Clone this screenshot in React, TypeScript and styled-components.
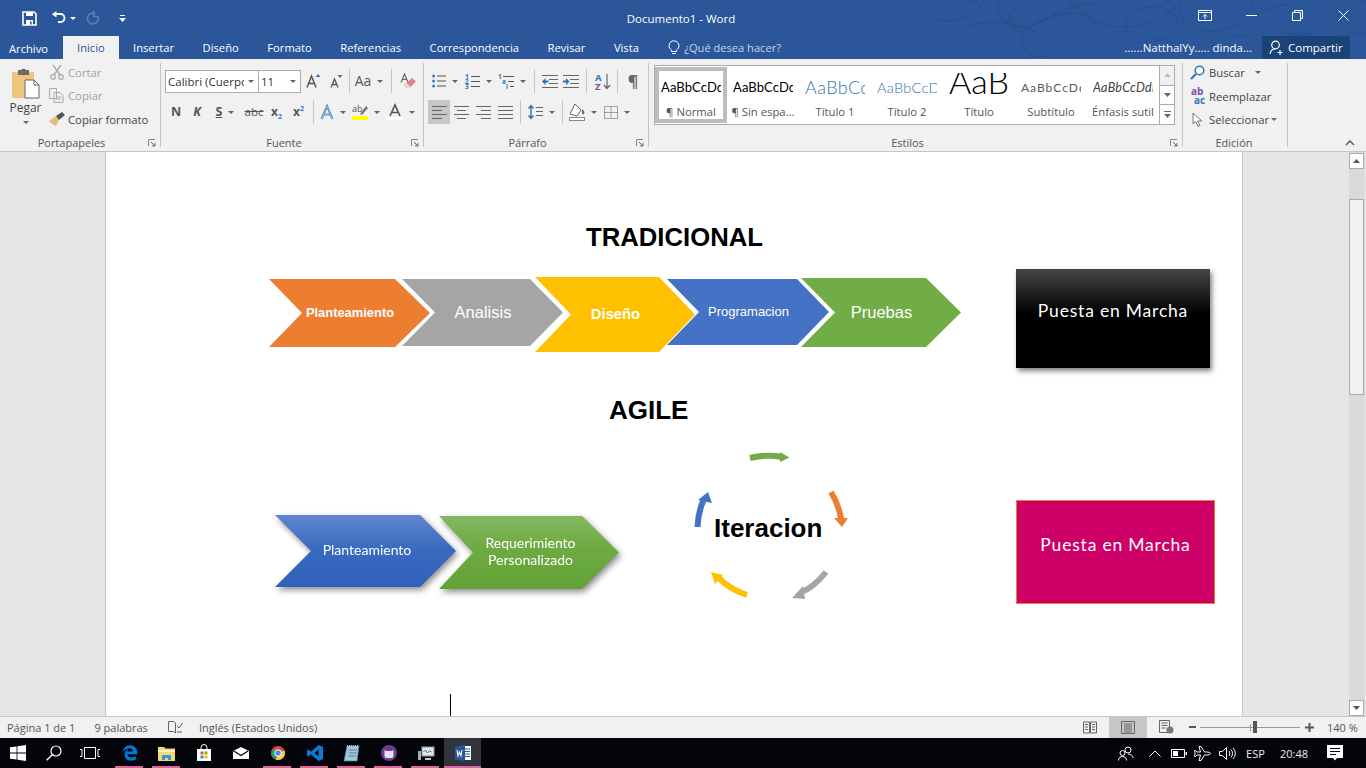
import React from "react";
import styled, { createGlobalStyle, css } from "styled-components";
import { FaEdgeLegacy } from "react-icons/fa6";

const UI = `"Open Sans", "Noto Sans", sans-serif`;
const PAGE_X = 106;
const PAGE_Y = 152;

const GlobalStyle = createGlobalStyle`
  html, body { margin: 0; padding: 0; overflow: hidden; background: #f1f1f1; }
  * { box-sizing: border-box; }
  svg { display: block; flex: none; overflow: visible; }
`;

const Shell = styled.div`
  width: 1366px;
  height: 768px;
  display: flex;
  flex-direction: column;
  font-family: ${UI};
  font-size: 11.3px;
  color: #444;
  overflow: hidden;
`;

/* ---------- title + tabs ---------- */
const Header = styled.header`
  position: relative;
  height: 59px;
  background: #2b579a;
  color: #fff;
  flex: none;
`;
const Filigree = styled.svg`
  position: absolute;
  left: 880px;
  top: 0;
  pointer-events: none;
`;
const TitleBar = styled.div`
  position: relative;
  height: 36px;
  display: grid;
  grid-template-columns: 1fr auto 1fr;
  align-items: center;
`;
const Qat = styled.div`
  display: flex;
  align-items: center;
  padding-left: 22px;
`;
const DocTitle = styled.div`
  font-size: 11.5px;
  padding-right: 4px;
`;
const WindowControls = styled.div`
  justify-self: end;
  display: flex;
  height: 36px;
`;
const WinBtn = styled.div`
  width: 46px;
  height: 30px;
  display: flex;
  align-items: center;
  justify-content: center;
`;
const TabBar = styled.div`
  position: relative;
  height: 23px;
  display: flex;
  align-items: stretch;
`;
const Tab = styled.div<{ $active?: boolean; $file?: boolean }>`
  display: flex;
  align-items: center;
  padding: 0 14.3px;
  font-size: 11.2px;
  color: #fff;
  ${(p) => p.$file && css`padding: 1px 15px 0 9px;`}
  ${(p) => p.$active && css`
    background: #f1f1f1;
    color: #2b579a;
    padding: 0 14px;
  `}
`;
const TellMe = styled.div`
  display: flex;
  align-items: center;
  gap: 4px;
  margin-left: 15px;
  color: #c5d3e8;
  font-size: 11.1px;
`;
const UserArea = styled.div`
  margin-left: auto;
  display: flex;
  align-items: center;
  padding-right: 16px;
  gap: 10px;
  font-size: 11.5px;
`;
const ShareBtn = styled.div`
  width: 88px;
  height: 23px;
  margin-top: -1px;
  background: #1a4478;
  display: flex;
  align-items: center;
  gap: 3px;
  padding-left: 7px;
`;

/* ---------- ribbon ---------- */
const Ribbon = styled.section`
  position: relative;
  height: 93px;
  flex: none;
  display: flex;
  background: #f1f1f1;
  border-bottom: 1px solid #c6c6c6;
`;
const Group = styled.div<{ $w: number; $pad?: number; $top?: number }>`
  position: relative;
  width: ${(p) => p.$w}px;
  flex: none;
  padding: ${(p) => p.$top ?? 6}px 0 0 ${(p) => p.$pad ?? 0}px;
  display: flex;
  flex-direction: column;
  &::after {
    content: "";
    position: absolute;
    right: 0;
    top: 4px;
    bottom: 4px;
    width: 1px;
    background: #c6c6c6;
  }
`;
const GroupBody = styled.div`
  flex: 1;
  min-height: 0;
`;
const GroupLabel = styled.div<{ $r: number }>`
  height: 16px;
  line-height: 16px;
  padding-right: ${(p) => p.$r}px;
  text-align: center;
  font-size: 11px;
  color: #555;
`;
const Launcher = styled.svg`
  position: absolute;
  right: 5px;
  bottom: 4px;
`;
const Collapse = styled.svg`
  position: absolute;
  left: 1345px;
  top: 81px;
`;
const Rows = styled.div`
  display: flex;
  flex-direction: column;
  gap: 7px;
  padding-top: 4px;
`;
const Row = styled.div`
  display: flex;
  align-items: center;
  height: 24px;
`;
const Slot = styled.div<{ $w: number; $active?: boolean }>`
  width: ${(p) => p.$w}px;
  height: 24px;
  flex: none;
  display: flex;
  align-items: center;
  justify-content: center;
  gap: 6px;
  ${(p) => p.$active && css`background: #c6c6c6;`}
`;
const Sep = styled.div<{ $w: number }>`
  width: ${(p) => p.$w}px;
  height: 24px;
  flex: none;
  display: flex;
  justify-content: center;
  &::before {
    content: "";
    width: 1px;
    height: 100%;
    background: #c6c6c6;
  }
`;
const Caret = styled.span<{ $ml?: number; $light?: boolean }>`
  width: 0;
  height: 0;
  flex: none;
  margin-left: ${(p) => p.$ml ?? 0}px;
  border-left: 3.5px solid transparent;
  border-right: 3.5px solid transparent;
  border-top: 3.5px solid ${(p) => (p.$light ? "#fff" : "#666")};
`;
const Combo = styled.div<{ $w: number }>`
  width: ${(p) => p.$w}px;
  height: 23px;
  flex: none;
  background: #fff;
  border: 1px solid #ababab;
  display: flex;
  align-items: center;
  justify-content: space-between;
  padding: 0 4px 0 2px;
  font-size: 11.5px;
  color: #333;
  white-space: nowrap;
  overflow: hidden;
  & + & { margin-left: -1px; }
`;
const ComboText = styled.span`
  overflow: hidden;
  width: 76px;
`;
const Glyph = styled.span<{ $size?: number; $bold?: boolean; $color?: string; $italic?: boolean; $strike?: boolean; $under?: boolean }>`
  font-family: "Open Sans", sans-serif;
  font-size: ${(p) => p.$size ?? 12}px;
  font-weight: ${(p) => (p.$bold ? 700 : 400)};
  font-style: ${(p) => (p.$italic ? "italic" : "normal")};
  color: ${(p) => p.$color ?? "#555"};
  text-decoration: ${(p) => (p.$strike ? "line-through" : p.$under ? "underline" : "none")};
  line-height: 1;
  & sub, & sup { font-size: 7px; color: #3f7cc0; line-height: 0; }
`;

/* clipboard */
const ClipWrap = styled.div`
  display: flex;
  height: 70px;
`;
const PasteCol = styled.div`
  width: 48px;
  padding: 6px 0 0 4px;
  display: flex;
  flex-direction: column;
  align-items: center;
  font-size: 12px;
  color: #444;
`;
const PasteLabel = styled.div`
  margin-top: 1px;
  line-height: 16px;
  padding-right: 1px;
`;
const PasteCaret = styled(Caret)`
  margin-top: 5px;
`;
const ActionList = styled.div`
  display: flex;
  flex-direction: column;
`;
const Action = styled.div<{ $muted?: boolean }>`
  height: 23.5px;
  display: flex;
  align-items: center;
  gap: 3px;
  white-space: nowrap;
  font-size: 11.3px;
  color: ${(p) => (p.$muted ? "#a3a3a3" : "#444")};
`;
const IconBox = styled.div`
  width: 17px;
  display: flex;
  justify-content: center;
`;

/* styles gallery */
const Gallery = styled.div`
  margin-left: 5px;
  width: 521px;
  height: 60px;
  display: flex;
  border: 1px solid #ababab;
  background: #fff;
`;
const StyleItem = styled.div<{ $active?: boolean }>`
  position: relative;
  width: 72px;
  height: 58px;
  flex: none;
  display: flex;
  flex-direction: column;
  align-items: center;
  padding-top: 7px;
  ${(p) => p.$active && css`
    &::after {
      content: "";
      position: absolute;
      inset: 1px 0;
      border: 4px solid #bdbdbd;
    }
  `}
`;
const StylePreview = styled.div<{ $size: number; $color?: string; $italic?: boolean; $spacing?: number; $light?: boolean; $large?: boolean }>`
  height: 28px;
  width: 60px;
  overflow: hidden;
  white-space: nowrap;
  display: flex;
  align-items: ${(p) => (p.$large ? "flex-end" : "center")};
  font-family: "Lato", sans-serif;
  font-size: ${(p) => p.$size}px;
  font-weight: ${(p) => (p.$light ? 300 : 400)};
  color: ${(p) => p.$color ?? "#000"};
  font-style: ${(p) => (p.$italic ? "italic" : "normal")};
  letter-spacing: ${(p) => p.$spacing ?? 0}px;
`;
const StyleLabel = styled.div`
  font-size: 11.3px;
  line-height: 16px;
  margin-top: 3px;
  color: #555;
  white-space: nowrap;
`;
const GalleryScroll = styled.div`
  margin-left: auto;
  width: 15px;
  display: flex;
  flex-direction: column;
  border-left: 1px solid #ababab;
`;
const GalleryBtn = styled.div<{ $muted?: boolean }>`
  flex: 1;
  display: flex;
  align-items: center;
  justify-content: center;
  background: ${(p) => (p.$muted ? "#f1f1f1" : "#fff")};
  & + & { border-top: 1px solid #ababab; }
`;

/* ---------- document ---------- */
const DocArea = styled.main`
  flex: 1;
  min-height: 0;
  display: flex;
  background: #e6e6e6;
`;
const Gutter = styled.div<{ $w: number }>`
  width: ${(p) => p.$w}px;
  flex: none;
`;
const Page = styled.div`
  position: relative;
  width: 1138px;
  flex: none;
  background: #fff;
  border-left: 1px solid #c6c6c6;
  border-right: 1px solid #c6c6c6;
`;
const Heading = styled.div<{ $x: number; $y: number; $size?: number }>`
  position: absolute;
  left: ${(p) => p.$x - PAGE_X}px;
  top: ${(p) => p.$y - PAGE_Y}px;
  font: 700 ${(p) => p.$size ?? 26}px/32px "Liberation Sans", Arial, sans-serif;
  color: #000;
  white-space: nowrap;
`;
const ShadowWrap = styled.div`
  filter: drop-shadow(2px 3px 3px rgba(0, 0, 0, 0.45));
`;
const Chevron = styled.div<{
  $x: number; $y: number; $w: number; $h: number; $notch: number; $tip: number;
  $bg: string; $size: number; $bold?: boolean; $calibri?: boolean;
}>`
  position: absolute;
  left: ${(p) => p.$x - PAGE_X}px;
  top: ${(p) => p.$y - PAGE_Y}px;
  width: ${(p) => p.$w}px;
  height: ${(p) => p.$h}px;
  padding: 0 0 ${(p) => (p.$calibri ? 3 : 1)}px ${(p) => (p.$calibri ? 3 : 1)}px;
  clip-path: polygon(
    0 0,
    calc(100% - ${(p) => p.$tip}px) 0,
    100% 50%,
    calc(100% - ${(p) => p.$tip}px) 100%,
    0 100%,
    ${(p) => p.$notch}px 50%
  );
  background: ${(p) => p.$bg};
  display: flex;
  align-items: center;
  justify-content: center;
  text-align: center;
  color: #fff;
  font-family: ${(p) => (p.$calibri ? `"Lato", sans-serif` : `"Liberation Sans", Arial, sans-serif`)};
  font-size: ${(p) => p.$size}px;
  font-weight: ${(p) => (p.$bold ? 700 : 400)};
  line-height: 17px;
`;
const MarchaBox = styled.div<{ $x: number; $y: number; $w: number; $h: number; $pink?: boolean }>`
  position: absolute;
  left: ${(p) => p.$x - PAGE_X}px;
  top: ${(p) => p.$y - PAGE_Y}px;
  width: ${(p) => p.$w}px;
  height: ${(p) => p.$h}px;
  display: flex;
  align-items: center;
  justify-content: center;
  padding-bottom: ${(p) => (p.$pink ? 15 : 17)}px;
  font: 400 17.5px "Lato", sans-serif;
  letter-spacing: 0.8px;
  color: #fff;
  ${(p) =>
    p.$pink
      ? css`
          background: #cc0066;
          border: 1px solid #ed7d31;
        `
      : css`
          background: linear-gradient(#474747 0%, #000 45%);
          box-shadow: 2px 3px 5px rgba(0, 0, 0, 0.5);
        `}
`;
const CycleArt = styled.svg`
  position: absolute;
  left: ${685 - PAGE_X}px;
  top: ${445 - PAGE_Y}px;
`;
const TextCaret = styled.div`
  position: absolute;
  left: ${450 - PAGE_X}px;
  bottom: 0;
  width: 1px;
  height: 22px;
  background: #000;
`;
const ScrollBar = styled.div`
  width: 16px;
  flex: none;
  background: #dadada;
  display: flex;
  flex-direction: column;
  padding-right: 1px;
`;
const ScrollBtn = styled.div`
  height: 16px;
  margin-top: 1px;
  background: #fff;
  border: 1px solid #ababab;
  display: flex;
  align-items: center;
  justify-content: center;
`;
const ScrollThumb = styled.div`
  height: 196px;
  margin-top: 30px;
  background: #f1f1f1;
  border: 1px solid #ababab;
`;
const ScrollFill = styled.div`
  flex: 1;
`;

/* ---------- status bar ---------- */
const StatusBar = styled.footer`
  height: 22px;
  flex: none;
  display: flex;
  align-items: center;
  background: #f1f1f1;
  border-top: 1px solid #c6c6c6;
  font-size: 11px;
  color: #555;
  padding: 0 0 1px 7px;
`;
const StatusText = styled.span<{ $gap: number }>`
  margin-right: ${(p) => p.$gap}px;
  white-space: nowrap;
`;
const StatusRight = styled.div`
  margin-left: auto;
  display: flex;
  align-items: center;
  height: 100%;
`;
const ViewBtn = styled.div<{ $w: number; $active?: boolean }>`
  width: ${(p) => p.$w}px;
  height: 21px;
  display: flex;
  align-items: center;
  justify-content: center;
  ${(p) => p.$active && css`background: #c6c6c6;`}
`;
const ZoomTrack = styled.div`
  position: relative;
  width: 100px;
  height: 1px;
  margin: 0 5px 0 4px;
  background: #999;
`;
const ZoomThumb = styled.div`
  position: absolute;
  left: 53px;
  top: -6px;
  width: 4px;
  height: 12px;
  background: #555;
`;
const ZoomMark = styled.div`
  position: absolute;
  left: 50px;
  top: -3px;
  width: 1px;
  height: 7px;
  background: #999;
`;
const ZoomPct = styled.span`
  width: 39px;
  margin-left: 13px;
  white-space: nowrap;
`;

/* ---------- taskbar ---------- */
const Taskbar = styled.nav`
  height: 30px;
  flex: none;
  display: flex;
  align-items: center;
  background: #04050a;
  color: #fff;
`;
const SysSlot = styled.div<{ $w: number; $r?: number }>`
  width: ${(p) => p.$w}px;
  height: 30px;
  padding-right: ${(p) => p.$r ?? 0}px;
  display: flex;
  align-items: center;
  justify-content: center;
  flex: none;
`;
const AppTile = styled.div<{ $open?: boolean; $active?: boolean }>`
  position: relative;
  width: 37px;
  height: 30px;
  flex: none;
  display: flex;
  align-items: center;
  justify-content: center;
  ${(p) => p.$active && css`background: #30333a;`}
  ${(p) => p.$open && css`
    &::after {
      content: "";
      position: absolute;
      left: ${p.$active ? 0 : 4}px;
      right: ${p.$active ? 0 : 5}px;
      bottom: 0;
      height: 2px;
      background: #d9659c;
    }
  `}
`;
const Tray = styled.div`
  margin-left: auto;
  padding-right: 11px;
  display: flex;
  align-items: center;
  height: 100%;
  font-size: 11px;
  color: #eee;
`;
const TrayItem = styled.div<{ $w: number }>`
  width: ${(p) => p.$w}px;
  display: flex;
  justify-content: center;
  flex: none;
`;

/* ---------- drawings ---------- */
const Lines = ({ rows, color = "#666" }: { rows: [number, number][]; color?: string }) => (
  <svg width="15" height="13" viewBox="0 0 15 13">
    {rows.map(([x, w], i) => (
      <rect key={i} x={x} y={i * (12 / (rows.length - 1 || 1))} width={w} height="1" fill={color} />
    ))}
  </svg>
);
const Bullets = () => (
  <svg width="14" height="13" viewBox="0 0 14 13">
    {[1, 6, 11].map((y) => (
      <g key={y}>
        <circle cx="1.6" cy={y} r="1.5" fill="#3f7cc0" />
        <rect x="5" y={y - 0.5} width="9" height="1" fill="#555" />
      </g>
    ))}
  </svg>
);
const Numbered = () => (
  <svg width="15" height="15" viewBox="0 0 15 15">
    {[0, 5, 10].map((y, i) => (
      <g key={y}>
        <text x="0" y={y + 5} fontSize="6.5" fontWeight="700" fill="#2f75b5" fontFamily="Open Sans">{i + 1}</text>
        <rect x="6" y={y + 2} width="9" height="1" fill="#555" />
      </g>
    ))}
  </svg>
);
const Multi = () => (
  <svg width="16" height="15" viewBox="0 0 16 15">
    <text x="0" y="5" fontSize="6.5" fontWeight="700" fill="#2f75b5" fontFamily="Open Sans">1</text>
    <rect x="5" y="2" width="11" height="1" fill="#555" />
    <text x="4" y="10" fontSize="6.5" fontWeight="700" fill="#2f75b5" fontFamily="Open Sans">a</text>
    <rect x="10" y="7" width="6" height="1" fill="#555" />
    <text x="8" y="15" fontSize="6.5" fontWeight="700" fill="#2f75b5" fontFamily="Open Sans">i</text>
    <rect x="12" y="12" width="4" height="1" fill="#555" />
  </svg>
);
const Indent = ({ flip }: { flip?: boolean }) => (
  <svg width="16" height="13" viewBox="0 0 16 13">
    {[0, 4, 8, 12].map((y) => (
      <rect key={y} x={y === 0 || y === 12 ? 0 : 7} y={y} width={y === 0 || y === 12 ? 16 : 9} height="1" fill="#666" />
    ))}
    {flip ? (
      <path d="M0 5.5h3V3l3.5 3.5L3 10V7.5H0z" fill="#2f75b5" />
    ) : (
      <path d="M6.5 5.5h-3V3L0 6.5 3.5 10V7.5h3z" fill="#2f75b5" />
    )}
  </svg>
);

const Dialog = () => (
  <Launcher width="8" height="8" viewBox="0 0 8 8">
    <path d="M0.5 7V0.5H7" stroke="#888" fill="none" />
    <path d="M3 3l4 4M7 4v3H4" stroke="#666" fill="none" />
  </Launcher>
);

const chevrons = [
  { text: "Planteamiento", x: 269, y: 279, w: 161, h: 68, notch: 33, tip: 35, bg: "#ed7d31", size: 12.9, bold: true },
  { text: "Analisis", x: 402, y: 279, w: 161, h: 67, notch: 33, tip: 33, bg: "#a5a5a5", size: 16.5 },
  { text: "Diseño", x: 535, y: 277, w: 160, h: 75, notch: 36, tip: 36, bg: "#ffc000", size: 14.8, bold: true },
  { text: "Programacion", x: 667, y: 279, w: 162, h: 66, notch: 32, tip: 32, bg: "#4472c4", size: 13 },
  { text: "Pruebas", x: 801, y: 278, w: 160, h: 69, notch: 34, tip: 35, bg: "#70ad47", size: 16.5 },
];

const styleItems = [
  { prev: "AaBbCcDdEe", label: "¶ Normal", size: 13, active: true, spacing: 0.1 },
  { prev: "AaBbCcDdEe", label: "¶ Sin espa...", size: 13, spacing: 0.1 },
  { prev: "AaBbCcDd", label: "Título 1", size: 18, color: "#2e74b5", spacing: 0.4, light: true },
  { prev: "AaBbCcDdEe", label: "Título 2", size: 14.5, color: "#2e74b5", spacing: 0.3, light: true },
  { prev: "AaB", label: "Título", size: 34, light: true, large: true },
  { prev: "AaBbCcDdEe", label: "Subtítulo", size: 12, color: "#595959", spacing: 1 },
  { prev: "AaBbCcDdEe", label: "Énfasis sutil", size: 12.5, color: "#404040", italic: true, spacing: 0.3 },
];

const tabs = ["Insertar", "Diseño", "Formato", "Referencias", "Correspondencia", "Revisar", "Vista"];

export default function App() {
  return (
    <Shell>
      <GlobalStyle />
      <Header>
        <Filigree width="486" height="59" viewBox="0 0 486 59" fill="none" stroke="#234e8e" strokeWidth="1">
          <path d="M30 0c10 20 40 28 60 14S110-6 80 4M60 36c30-14 60-20 90-6s26 30 6 26-20-26 6-36 40-10 60 8" />
          <path d="M120 0c-10 16 14 34 36 24s30-20 60-20M150 36c-20-6-30-20-10-30M190 0c20 24 50 34 80 22s30-22 14-22" />
          <path d="M260 44c-20-10-20-30 4-36s40 10 30 24-30 8-24-6M300 0c-6 20 12 36 40 30s40-24 70-26M370 0c10 26 40 44 70 30s36-26 46-30" />
          <path d="M320 59c10-20 40-30 60-18s14 28-6 18M430 50c20-10 40-20 56-16" />
        </Filigree>
        <TitleBar>
          <Qat>
            <svg width="15" height="15" viewBox="0 0 15 15">
              <path d="M1 1h11l2 2v11H1z" fill="none" stroke="#fff" strokeWidth="1.6" />
              <path d="M4 1h7v4H4zM4 9h7v5H4z" fill="#fff" />
              <rect x="8" y="10.5" width="1.6" height="3" fill="#2b579a" />
            </svg>
            <svg style={{ marginLeft: 14 }} width="15" height="14" viewBox="0 0 15 14">
              <path d="M4 3h5.5a4 4 0 0 1 0 8H7" fill="none" stroke="#fff" strokeWidth="1.8" />
              <path d="M5.5 0v6.5L0.8 3.2z" fill="#fff" />
            </svg>
            <Caret $ml={4} $light />
            <svg style={{ marginLeft: 10 }} width="14" height="14" viewBox="0 0 14 14">
              <path d="M9.5 2.8A5.4 5.4 0 1 0 12.2 7" fill="none" stroke="#5b7fb8" strokeWidth="1.6" />
              <path d="M7.5 0v5.5h5.5" fill="none" stroke="#5b7fb8" strokeWidth="1.6" />
            </svg>
            <svg style={{ marginLeft: 19 }} width="7" height="7" viewBox="0 0 7 7">
              <path d="M1 0h5v1H1zM0 3h7L3.5 7z" fill="#fff" />
            </svg>
          </Qat>
          <DocTitle>Documento1 - Word</DocTitle>
          <WindowControls>
            <WinBtn>
              <svg width="14" height="11" viewBox="0 0 14 11">
                <path d="M.5.5h13v10H.5zM.5 2.5h13" fill="none" stroke="#fff" />
                <path d="M7 9V4.5M5 6.5l2-2 2 2" fill="none" stroke="#fff" />
              </svg>
            </WinBtn>
            <WinBtn>
              <svg width="11" height="1"><rect width="11" height="1" fill="#fff" /></svg>
            </WinBtn>
            <WinBtn>
              <svg width="11" height="11" viewBox="0 0 11 11">
                <path d="M.5 2.5h8v8h-8zM2.5 2.5v-2h8v8h-2" fill="none" stroke="#fff" />
              </svg>
            </WinBtn>
            <WinBtn>
              <svg width="11" height="11" viewBox="0 0 11 11">
                <path d="M.5.5l10 10M10.5.5l-10 10" stroke="#fff" />
              </svg>
            </WinBtn>
          </WindowControls>
        </TitleBar>
        <TabBar>
          <Tab $file>Archivo</Tab>
          <Tab $active>Inicio</Tab>
          {tabs.map((t) => (
            <Tab key={t}>{t}</Tab>
          ))}
          <TellMe>
            <svg width="12" height="15" viewBox="0 0 12 15">
              <path d="M3.5 10C2 8.800 1 7.500 1 5.800a5 5 0 0 1 10 0c0 1.700-1 3-2.500 4.200v1.500h-5zM4 13.500h4" fill="none" stroke="#fff" />
            </svg>
            ¿Qué desea hacer?
          </TellMe>
          <UserArea>
            ......NatthalYy..... dinda...
            <ShareBtn>
              <svg width="16" height="15" viewBox="0 0 16 15">
                <circle cx="6.500" cy="5" r="3.800" fill="none" stroke="#fff" strokeWidth="1.200" />
                <path d="M1 14c.5-3 2.500-5 5-5M11 10v5M8.500 12.500h5" fill="none" stroke="#fff" strokeWidth="1.200" />
              </svg>
              Compartir
            </ShareBtn>
          </UserArea>
        </TabBar>
      </Header>

      <Ribbon>
        <Group $w={161} $top={2}>
          <GroupBody>
            <ClipWrap>
              <PasteCol>
                <svg width="30" height="32" viewBox="0 0 30 32">
                  <path d="M1 5h22v26H3a2 2 0 0 1-2-2z" fill="#edc57f" />
                  <path d="M7 3h3a3 3 0 0 1 5 0h3v5H7z" fill="#6a6a6a" />
                  <path d="M14 13h9l5 5v13H14z" fill="#fff" stroke="#666" />
                  <path d="M23 13v5h5" fill="none" stroke="#666" />
                </svg>
                <PasteLabel>Pegar</PasteLabel>
                <PasteCaret />
              </PasteCol>
              <ActionList>
                <Action $muted>
                  <IconBox>
                    <svg width="14" height="15" viewBox="0 0 14 15">
                      <circle cx="3" cy="12" r="2.300" fill="none" stroke="#aaa" strokeWidth="1.200" />
                      <circle cx="11" cy="12" r="2.300" fill="none" stroke="#aaa" strokeWidth="1.200" />
                      <path d="M4 10L11 0M10 10L3 0" stroke="#aaa" strokeWidth="1.400" />
                    </svg>
                  </IconBox>
                  Cortar
                </Action>
                <Action $muted>
                  <IconBox>
                    <svg width="15" height="15" viewBox="0 0 15 15">
                      <path d="M.5.500h7v10h-7zM5 4.500h6l3 3v7H5z" fill="#f1f1f1" stroke="#aaa" />
                      <path d="M7 9h5M7 11h5" stroke="#aaa" />
                    </svg>
                  </IconBox>
                  Copiar
                </Action>
                <Action>
                  <IconBox>
                    <svg width="16" height="14" viewBox="0 0 16 14">
                      <path d="M0 9l7-5 3 4-3 6C4 13 2 11 0 9z" fill="#e8bd75" />
                      <path d="M7 4l6-4 3 3-6 5z" fill="#555" />
                    </svg>
                  </IconBox>
                  Copiar formato
                </Action>
              </ActionList>
            </ClipWrap>
          </GroupBody>
          <GroupLabel $r={18}>Portapapeles</GroupLabel>
          <Dialog />
        </Group>

        <Group $w={263} $pad={4}>
          <GroupBody>
            <Rows>
              <Row>
                <Combo $w={94}>
                  <ComboText>Calibri (Cuerpo</ComboText>
                  <Caret />
                </Combo>
                <Combo $w={43}>
                  11
                  <Caret />
                </Combo>
                <Slot $w={24}>
                  <svg width="15" height="14" viewBox="0 0 15 14">
                    <path d="M1 13.500L5.500 2 10 13.500M2.800 9.500h5.400" fill="none" stroke="#555" strokeWidth="1.500" />
                    <path d="M9.500 3L12 0l2.500 3z" fill="#2f75b5" />
                  </svg>
                </Slot>
                <Slot $w={22}>
                  <svg width="13" height="13" viewBox="0 0 13 13">
                    <path d="M1 12.500L4.500 4 8 12.500M2.300 9.500h4.400" fill="none" stroke="#555" strokeWidth="1.300" />
                    <path d="M7.500 0h5L10 3z" fill="#2f75b5" />
                  </svg>
                </Slot>
                <Sep $w={5} />
                <Slot $w={34}>
                  <Glyph $size={14}>Aa</Glyph>
                  <Caret />
                </Slot>
                <Sep $w={10} />
                <Slot $w={24}>
                  <svg width="16" height="16" viewBox="0 0 16 16">
                    <path d="M1 9.500L4.500 1 8 9.500M2.300 6.500h4.400" fill="none" stroke="#666" strokeWidth="1.200" />
                    <path d="M4 12l8-7 4 3.500-6.500 6.500H6.500z" fill="#e67c90" />
                    <path d="M4 12l2.500-2.200 4 3.700L9.500 15H6.500z" fill="#f6cfd6" />
                  </svg>
                </Slot>
              </Row>
              <Row>
                <Slot $w={22}><Glyph $bold $size={12.5}>N</Glyph></Slot>
                <Slot $w={20}><Glyph $bold $italic $size={12.5}>K</Glyph></Slot>
                <Slot $w={36}><Glyph $bold $under $size={12.5}>S</Glyph><Caret /></Slot>
                <Slot $w={22}><Glyph $strike $size={11.500}>abc</Glyph></Slot>
                <Slot $w={23}><Glyph $bold $size={12}>x<sub>2</sub></Glyph></Slot>
                <Slot $w={21}><Glyph $bold $size={12}>x<sup>2</sup></Glyph></Slot>
                <Sep $w={8} />
                <Slot $w={32}>
                  <svg width="14" height="15" viewBox="0 0 14 15">
                    <path d="M1.500 14L7 1l5.500 13M3.800 9.500h6.400" fill="none" stroke="#3f7cc0" strokeWidth="2" />
                    <path d="M1.500 14L7 1l5.500 13M3.800 9.500h6.400" fill="none" stroke="#cfe2f5" strokeWidth=".6" />
                  </svg>
                  <Caret />
                </Slot>
                <Slot $w={34}>
                  <svg width="16" height="16" viewBox="0 0 16 16">
                    <text x="0" y="8" fontSize="9" fill="#555" fontFamily="Open Sans">ab</text>
                    <path d="M8 10l6-8 2 2-6 7z" fill="#777" />
                    <rect x="0" y="12" width="16" height="4" fill="#ffff00" />
                  </svg>
                  <Caret />
                </Slot>
                <Slot $w={35}>
                  <svg width="16" height="16" viewBox="0 0 16 16">
                    <path d="M3 12L8 1l5 11M5 8.500h6" fill="none" stroke="#555" strokeWidth="1.600" />
                    <rect x="0" y="13" width="16" height="3" fill="#fff" />
                  </svg>
                  <Caret />
                </Slot>
              </Row>
            </Rows>
          </GroupBody>
          <GroupLabel $r={21}>Fuente</GroupLabel>
          <Dialog />
        </Group>

        <Group $w={225} $pad={4}>
          <GroupBody>
            <Rows>
              <Row>
                <Slot $w={34}><Bullets /><Caret /></Slot>
                <Slot $w={33}><Numbered /><Caret /></Slot>
                <Slot $w={33}><Multi /><Caret /></Slot>
                <Sep $w={12} />
                <Slot $w={19}><Indent /></Slot>
                <Slot $w={24}><Indent flip /></Slot>
                <Sep $w={6} />
                <Slot $w={28}>
                  <svg width="16" height="17" viewBox="0 0 16 17">
                    <text x="0" y="8" fontSize="9.500" fontWeight="700" fill="#2f75b5" fontFamily="Open Sans">A</text>
                    <text x="0" y="17" fontSize="9.500" fontWeight="700" fill="#7e4ca5" fontFamily="Open Sans">Z</text>
                    <path d="M12 1v14M9 12l3 3.500 3-3.500" fill="none" stroke="#666" strokeWidth="1.200" />
                  </svg>
                </Slot>
                <Sep $w={1} />
                <Slot $w={30}><Glyph $bold $size={16} $color="#666">¶</Glyph></Slot>
              </Row>
              <Row>
                <Slot $w={22} $active><Lines rows={[[0, 15], [0, 10], [0, 15], [0, 10]]} /></Slot>
                <Slot $w={22}><Lines rows={[[0, 15], [3, 9], [0, 15], [3, 9]]} /></Slot>
                <Slot $w={22}><Lines rows={[[0, 15], [5, 10], [0, 15], [5, 10]]} /></Slot>
                <Slot $w={22}><Lines rows={[[0, 15], [0, 15], [0, 15], [0, 15]]} /></Slot>
                <Sep $w={8} />
                <Slot $w={34}>
                  <svg width="15" height="16" viewBox="0 0 15 16">
                    <path d="M3 2v12M.5 4.500L3 1.500 5.500 4.500M.5 11.500L3 14.500 5.500 11.500" fill="none" stroke="#2f75b5" strokeWidth="1.400" />
                    <path d="M8 3h7v1H8zM8 7h7v1H8zM8 11h7v1H8z" fill="#666" />
                  </svg>
                  <Caret />
                </Slot>
                <Sep $w={8} />
                <Slot $w={34}>
                  <svg width="16" height="18" viewBox="0 0 16 18">
                    <path d="M6 1l6 6-4 6-7-2z" fill="#fff" stroke="#666" />
                    <path d="M13 6c2 2 3 3 2 5-1 1-2 0-2-1z" fill="#2f75b5" />
                    <rect x=".5" y="14.500" width="15" height="3" fill="#fff" stroke="#888" />
                  </svg>
                  <Caret />
                </Slot>
                <Slot $w={34}>
                  <svg width="14" height="13" viewBox="0 0 14 13">
                    <path d="M.5.500h13v12H.5zM7 .5v12M.5 6.500h13" fill="none" stroke="#555" strokeDasharray="1 1" />
                  </svg>
                  <Caret />
                </Slot>
              </Row>
            </Rows>
          </GroupBody>
          <GroupLabel $r={22}>Párrafo</GroupLabel>
          <Dialog />
        </Group>

        <Group $w={534}>
          <GroupBody>
            <Gallery>
              {styleItems.map((s) => (
                <StyleItem key={s.label} $active={s.active}>
                  <StylePreview $size={s.size} $color={s.color} $italic={s.italic} $spacing={s.spacing} $light={s.light} $large={s.large}>
                    {s.prev}
                  </StylePreview>
                  <StyleLabel>{s.label}</StyleLabel>
                </StyleItem>
              ))}
              <GalleryScroll>
                <GalleryBtn $muted>
                  <svg width="7" height="4"><path d="M0 4l3.500-4L7 4z" fill="#bbb" /></svg>
                </GalleryBtn>
                <GalleryBtn>
                  <svg width="7" height="4"><path d="M0 0l3.500 4L7 0z" fill="#666" /></svg>
                </GalleryBtn>
                <GalleryBtn>
                  <svg width="7" height="7"><path d="M0 0h7v1H0zM0 3h7L3.500 7z" fill="#666" /></svg>
                </GalleryBtn>
              </GalleryScroll>
            </Gallery>
          </GroupBody>
          <GroupLabel $r={17}>Estilos</GroupLabel>
          <Dialog />
        </Group>

        <Group $w={105} $pad={6} $top={2}>
          <GroupBody>
            <ActionList>
              <Action>
                <IconBox>
                  <svg width="15" height="15" viewBox="0 0 15 15">
                    <circle cx="9.500" cy="5.500" r="4.300" fill="#fff" stroke="#2f75b5" strokeWidth="1.600" />
                    <path d="M6 9l-5 5" stroke="#2f75b5" strokeWidth="2.200" />
                  </svg>
                </IconBox>
                Buscar
                <Caret $ml={7} />
              </Action>
              <Action>
                <IconBox>
                  <svg width="16" height="18" viewBox="0 0 16 18">
                    <text x="1" y="8" fontSize="10" fontWeight="700" fill="#7e4ca5" fontFamily="Open Sans">ab</text>
                    <text x="4" y="17" fontSize="10" fontWeight="700" fill="#2f75b5" fontFamily="Open Sans">ac</text>
                  </svg>
                </IconBox>
                Reemplazar
              </Action>
              <Action>
                <IconBox>
                  <svg width="11" height="15" viewBox="0 0 11 15">
                    <path d="M1 1v11l2.500-2.500L6 14.500l2-1-2.500-4.500H10z" fill="#fff" stroke="#777" />
                  </svg>
                </IconBox>
                Seleccionar
                <Caret $ml={-1} />
              </Action>
            </ActionList>
          </GroupBody>
          <GroupLabel $r={9}>Edición</GroupLabel>
        </Group>
        <Collapse width="10" height="6" viewBox="0 0 10 6">
          <path d="M1 5l4-4 4 4" fill="none" stroke="#555" strokeWidth="1.400" />
        </Collapse>
      </Ribbon>

      <DocArea>
        <Gutter $w={105} />
        <Page>
          <Heading $x={586} $y={221} $size={25.7}>TRADICIONAL</Heading>
          <Heading $x={609} $y={394}>AGILE</Heading>
          {chevrons.map((c) => (
            <Chevron key={c.text} $x={c.x} $y={c.y} $w={c.w} $h={c.h} $notch={c.notch} $tip={c.tip} $bg={c.bg} $size={c.size} $bold={c.bold}>
              {c.text}
            </Chevron>
          ))}
          <MarchaBox $x={1016} $y={269} $w={194} $h={99}>Puesta en Marcha</MarchaBox>

          <ShadowWrap>
            <Chevron $x={275} $y={515} $w={181} $h={72} $notch={36} $tip={36} $bg="linear-gradient(#5f86cf, #3a6bc0 45%, #2f61b9)" $size={14} $calibri>
              Planteamiento
            </Chevron>
            <Chevron $x={439} $y={516} $w={180} $h={73} $notch={34} $tip={37} $bg="linear-gradient(#82b860, #6eaa42 45%, #62a336)" $size={14} $calibri>
              Requerimiento
              <br />
              Personalizado
            </Chevron>
          </ShadowWrap>

          <CycleArt width="170" height="165" viewBox="0 0 170 165" fill="none" strokeWidth="6">
            <path d="M65 13Q82 9 97 12" stroke="#70ad47" />
            <path d="M95 7L104.500 12.500 95 17z" fill="#70ad47" />
            <path d="M146 47Q154 60 156 74" stroke="#ed7d31" />
            <path d="M149 73L163 73 157 82z" fill="#ed7d31" />
            <path d="M141 127Q129 142 117 147" stroke="#a5a5a5" />
            <path d="M118 141L107 153 120 154z" fill="#a5a5a5" />
            <path d="M62 150Q44 144 34 133" stroke="#ffc000" />
            <path d="M38 130L26 127 30 139z" fill="#ffc000" />
            <path d="M12.500 82Q13 67 19 54" stroke="#4472c4" />
            <path d="M13 55L23 47 27 58z" fill="#4472c4" />
          </CycleArt>
          <Heading $x={714} $y={512}>Iteracion</Heading>
          <MarchaBox $x={1016} $y={500} $w={199} $h={104} $pink>Puesta en Marcha</MarchaBox>
          <TextCaret />
        </Page>
        <Gutter $w={106} />
        <ScrollBar>
          <ScrollBtn>
            <svg width="7" height="4"><path d="M0 4l3.500-4L7 4z" fill="#555" /></svg>
          </ScrollBtn>
          <ScrollThumb />
          <ScrollFill />
          <ScrollBtn>
            <svg width="7" height="4"><path d="M0 0l3.500 4L7 0z" fill="#555" /></svg>
          </ScrollBtn>
        </ScrollBar>
      </DocArea>

      <StatusBar>
        <StatusText $gap={19}>Página 1 de 1</StatusText>
        <StatusText $gap={20}>9 palabras</StatusText>
        <svg width="15" height="13" viewBox="0 0 15 13" style={{ marginRight: 16 }}>
          <path d="M.5.500h5l2 1.500v10L5.500 10.500h-5zM7.500 2v10" fill="none" stroke="#666" />
          <path d="M9 5l2 2 3.500-5M9 11h5" fill="none" stroke="#666" />
        </svg>
        <StatusText $gap={0}>Inglés (Estados Unidos)</StatusText>
        <StatusRight>
          <ViewBtn $w={38}>
            <svg width="14" height="13" viewBox="0 0 14 13">
              <path d="M.5 1h6v11h-6zM7.500 1h6v11h-6zM2 3.500h3M2 6h3M2 8.500h3M9 3.500h3M9 6h3M9 8.500h3" fill="none" stroke="#666" />
            </svg>
          </ViewBtn>
          <ViewBtn $w={38} $active>
            <svg width="14" height="13" viewBox="0 0 14 13">
              <path d="M.5.500h13v12H.5zM3 3h8M3 5h8M3 7h8M3 9h8M3 11h8" fill="none" stroke="#666" />
            </svg>
          </ViewBtn>
          <ViewBtn $w={38}>
            <svg width="15" height="14" viewBox="0 0 15 14">
              <path d="M.5.500h10v12H.5zM2.500 3h6M2.500 5.500h6M2.500 8h4" fill="none" stroke="#666" />
              <circle cx="11" cy="10" r="3.500" fill="#777" />
            </svg>
          </ViewBtn>
          <svg width="7" height="2" style={{ marginLeft: 4 }}><rect width="7" height="2" fill="#555" /></svg>
          <ZoomTrack>
            <ZoomMark />
            <ZoomThumb />
          </ZoomTrack>
          <svg width="9" height="9" viewBox="0 0 9 9"><path d="M0 3.500h9v2H0zM3.500 0h2v9h-2z" fill="#555" /></svg>
          <ZoomPct>140 %</ZoomPct>
        </StatusRight>
      </StatusBar>

      <Taskbar>
        <SysSlot $w={36}>
          <svg width="16" height="16" viewBox="0 0 16 16">
            <path d="M0 2.300L6.600 1.400v6.200H0zM7.400 1.300L16 0v7.600H7.400zM0 8.400h6.600v6.200L0 13.700zM7.400 8.400H16V16l-8.600-1.200z" fill="#fff" />
          </svg>
        </SysSlot>
        <SysSlot $w={36}>
          <svg width="16" height="16" viewBox="0 0 16 16">
            <circle cx="10" cy="6" r="5" fill="none" stroke="#fff" strokeWidth="1.200" />
            <path d="M6.500 9.500L.7 15.300" stroke="#fff" strokeWidth="1.400" />
          </svg>
        </SysSlot>
        <SysSlot $w={39} $r={3}>
          <svg width="20" height="12" viewBox="0 0 20 12">
            <path d="M4.500.5h11v11h-11zM0 2.500h2v7H0M20 2.500h-2v7h2" fill="none" stroke="#fff" />
          </svg>
        </SysSlot>
        <AppTile $open>
          <FaEdgeLegacy size={16} color="#0078d7" />
        </AppTile>
        <AppTile $open>
          <svg width="17" height="15" viewBox="0 0 17 15">
            <path d="M0 1h6l1.500 1.500H17V15H0z" fill="#f5d774" />
            <path d="M0 4h17v2H0z" fill="#fff2bd" />
            <path d="M4 14v-4a1 1 0 0 1 1-1h7a1 1 0 0 1 1 1v4h-3v-2H7v2z" fill="#2f9bd8" />
          </svg>
        </AppTile>
        <AppTile>
          <svg width="16" height="16" viewBox="0 0 16 16">
            <path d="M1 4h14v12H1z" fill="#fff" />
            <path d="M5 4V2.500a3 3 0 0 1 6 0V4" fill="none" stroke="#fff" />
            <rect x="4.500" y="6.500" width="3" height="3" fill="#f25022" />
            <rect x="8.500" y="6.500" width="3" height="3" fill="#7fba00" />
            <rect x="4.500" y="10.500" width="3" height="3" fill="#00a4ef" />
            <rect x="8.500" y="10.500" width="3" height="3" fill="#ffb900" />
          </svg>
        </AppTile>
        <AppTile>
          <svg width="16" height="12" viewBox="0 0 16 12">
            <path d="M0 4L8 0l8 4v8H0z" fill="#fff" />
            <path d="M0 3.500l8 5 7-4.500" fill="none" stroke="#04050a" strokeWidth="1.200" />
          </svg>
        </AppTile>
        <AppTile $open>
          <svg width="14" height="14" viewBox="0 0 14 14">
            <circle cx="7" cy="7" r="7" fill="#dd4b3e" />
            <path d="M7 7L1 3.500A7 7 0 0 0 5 13.700z" fill="#1da462" />
            <path d="M7 7l6.500-2.500a7 7 0 0 1-8.500 9.200z" fill="#ffcd40" />
            <circle cx="7" cy="7" r="3.300" fill="#4a8af4" stroke="#fff" strokeWidth="1" />
          </svg>
        </AppTile>
        <AppTile $open>
          <svg width="16" height="16" viewBox="0 0 16 16">
            <path d="M11.500 0L16 2v12l-4.500 2L4 9.300 1.500 11.500 0 10.500V5.500l1.500-1L4 6.700zM11.500 4.500L7.500 8l4 3.500z" fill="#0e7ad1" fillRule="evenodd" />
          </svg>
        </AppTile>
        <AppTile $open>
          <svg width="16" height="17" viewBox="0 0 16 17">
            <path d="M3 1h12l-2 15H0z" fill="#9fc9dc" stroke="#5a7f90" strokeWidth=".7" />
            <path d="M5 5h8M5 8h7.500M4.500 11h7.500" stroke="#5a7f90" />
            <path d="M3 1h12" stroke="#ddd" strokeWidth="1.600" strokeDasharray="1 1" />
          </svg>
        </AppTile>
        <AppTile $open>
          <svg width="16" height="16" viewBox="0 0 16 16">
            <circle cx="8" cy="8" r="8" fill="#6a3d8e" />
            <path d="M3.500 5l2 1h5l2-1v6a2 2 0 0 1-2 2h-5a2 2 0 0 1-2-2z" fill="#e9dff0" />
          </svg>
        </AppTile>
        <AppTile $open>
          <svg width="16" height="15" viewBox="0 0 16 15">
            <rect x="4" y="1" width="12" height="9" fill="#dfe6ea" stroke="#999" />
            <path d="M5.500 6l2-2 2 3 2-2 2 1" fill="none" stroke="#2f75b5" />
            <rect x="0" y="5" width="3" height="9" fill="#aaa" />
            <rect x="7" y="12" width="6" height="2" fill="#ccc" />
          </svg>
        </AppTile>
        <AppTile $open $active>
          <svg width="16" height="16" viewBox="0 0 16 16">
            <rect x="7" y="1" width="9" height="14" fill="#fff" />
            <path d="M9 4h6M9 6.500h6M9 9h6M9 11.500h6" stroke="#2b579a" />
            <path d="M0 1.500L10 0v16L0 14.500z" fill="#2b579a" />
            <path d="M2 5l1 6 1.500-4L6 11l1-6" fill="none" stroke="#fff" strokeWidth="1.100" />
          </svg>
        </AppTile>
        <Tray>
          <TrayItem $w={28}>
            <svg width="16" height="15" viewBox="0 0 16 15">
              <circle cx="10" cy="4" r="3" fill="none" stroke="#fff" />
              <circle cx="4.500" cy="7" r="2.500" fill="none" stroke="#fff" />
              <path d="M0.500 14.500c0-2.500 1.500-4 4-4s4 1.500 4 4M10 8c2.500 0 5 1.500 5 4" fill="none" stroke="#fff" />
            </svg>
          </TrayItem>
          <TrayItem $w={29}>
            <svg width="12" height="7" viewBox="0 0 12 7"><path d="M.5 6.500L6 1l5.500 5.500" fill="none" stroke="#fff" /></svg>
          </TrayItem>
          <TrayItem $w={20}>
            <svg width="16" height="9" viewBox="0 0 16 9">
              <path d="M.5.500h13v8H.5z" fill="none" stroke="#fff" />
              <rect x="2" y="2" width="5" height="5" fill="#fff" />
              <rect x="14.500" y="3" width="1.500" height="3" fill="#fff" />
            </svg>
          </TrayItem>
          <TrayItem $w={27}>
            <svg width="17" height="15" viewBox="0 0 17 15">
              <path d="M16.500 7.500c0-1-2-1.500-4-1.500h-2L7 .5H5l1.500 5.500H3L1.500 4.500H.5L1 7.500.5 10.500h1L3 9h3.500L5 14.500h2L10.500 9h2c2 0 4-.5 4-1.500z" fill="none" stroke="#fff" />
            </svg>
          </TrayItem>
          <TrayItem $w={21}>
            <svg width="16" height="13" viewBox="0 0 16 13">
              <path d="M.5 4.500h3l4-4v12l-4-4h-3zM10 4c1 1 1 4 0 5M12 2.500c2 2 2 6 0 8M14 1c3 3 3 8 0 11" fill="none" stroke="#fff" />
            </svg>
          </TrayItem>
          <TrayItem $w={37}>ESP</TrayItem>
          <TrayItem $w={40}>20:48</TrayItem>
          <TrayItem $w={41}>
            <svg width="16" height="16" viewBox="0 0 16 16">
              <path d="M0 0h16v13h-6l-2 2.500L6 13H0z" fill="#fff" />
              <path d="M3 3.500h10M3 6.500h10M3 9.500h6" stroke="#04050a" />
            </svg>
          </TrayItem>
        </Tray>
      </Taskbar>
    </Shell>
  );
}
